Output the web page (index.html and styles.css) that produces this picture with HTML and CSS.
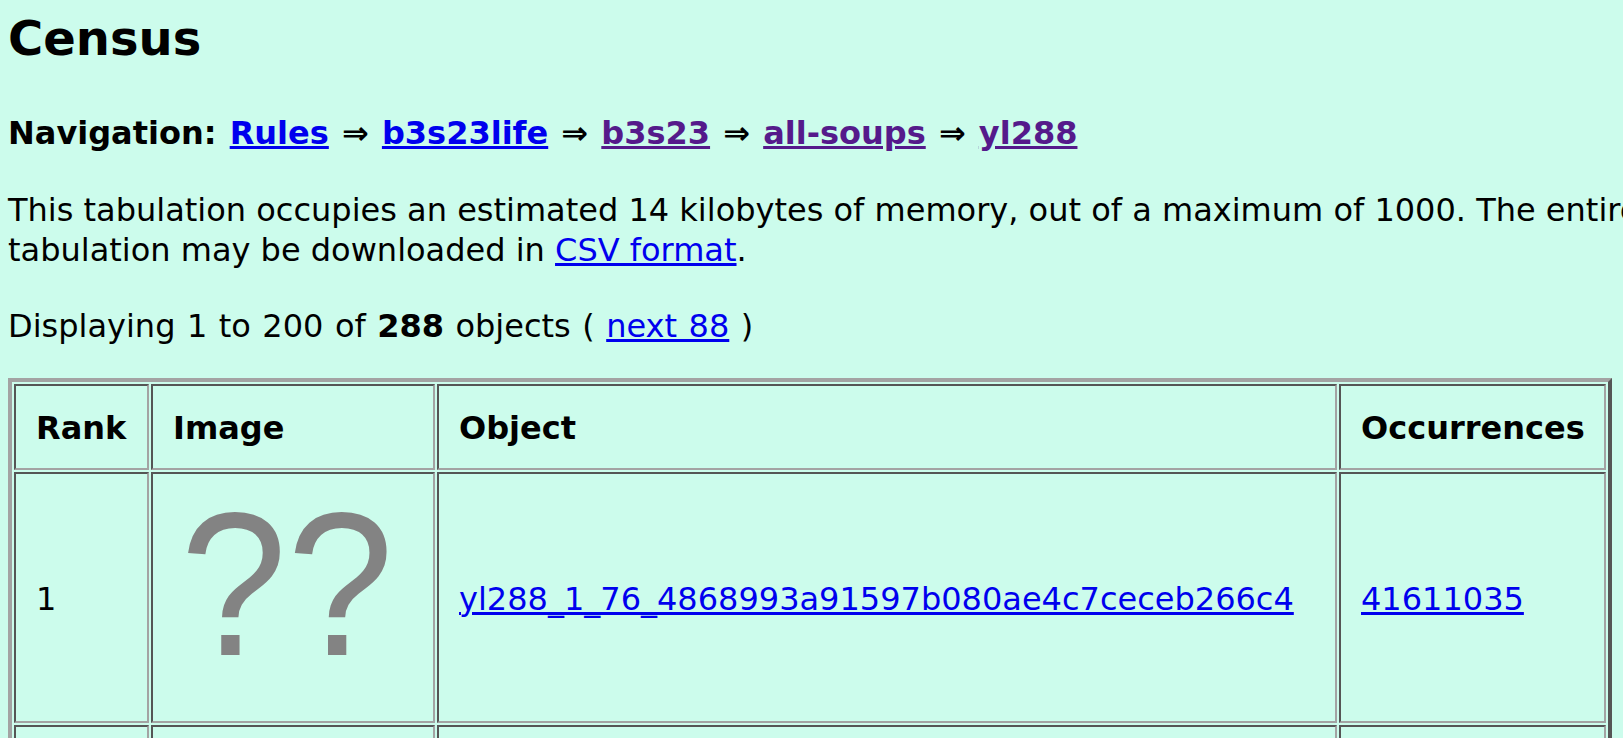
FILE: index.html
```html
<!DOCTYPE html>
<html>
<head>
<meta charset="utf-8">
<title>Census</title>
<link rel="stylesheet" href="styles.css">
</head>
<body>
<h1 class="title">Census</h1>
<p class="nav"><b>Navigation:</b> <a class="link" href="#">Rules</a> &rArr; <a class="link" href="#">b3s23life</a> &rArr; <a class="link visited" href="#">b3s23</a> &rArr; <a class="link visited" href="#">all-soups</a> &rArr; <a class="link visited" href="#">yl288</a></p>
<p class="text memory">This tabulation occupies an estimated 14 kilobytes of memory, out of a maximum of 1000. The entire tabulation may be downloaded in <a class="link" href="#">CSV format</a>.</p>
<p class="text display">Displaying 1 to 200 of <b>288</b> objects ( <a class="link" href="#">next 88</a> )</p>
<table class="census">
<thead>
<tr>
<th class="c-rank">Rank</th>
<th class="c-image">Image</th>
<th class="c-object">Object</th>
<th class="c-occ">Occurrences</th>
</tr>
</thead>
<tbody>
<tr>
<td>1</td>
<td><svg class="unknown" width="240" height="205" viewBox="0 0 240 205"><text x="114" y="159" text-anchor="middle" transform="translate(114 0) scale(0.94 1) translate(-114 0)" font-family="Liberation Sans, Arial, sans-serif" font-size="204" fill="#838383">??</text></svg></td>
<td><a class="link" href="#">yl288_1_76_4868993a91597b080ae4c7ceceb266c4</a></td>
<td><a class="link" href="#">41611035</a></td>
</tr>
<tr>
<td>2</td>
<td><svg class="unknown" width="240" height="205" viewBox="0 0 240 205"><text x="114" y="159" text-anchor="middle" transform="translate(114 0) scale(0.94 1) translate(-114 0)" font-family="Liberation Sans, Arial, sans-serif" font-size="204" fill="#838383">??</text></svg></td>
<td><a class="link" href="#">yl288_1_76_4868993a91597b080ae4c7ceceb266c4</a></td>
<td><a class="link" href="#">41611035</a></td>
</tr>
</tbody>
</table>
</body>
</html>
```

FILE: styles.css
```css
html, body {
  overflow-x: hidden;
}
body {
  margin: 0;
  padding: 0 8px;
  background: #ccfcec;
  color: #000;
  font-family: "DejaVu Sans", Verdana, sans-serif;
  font-size: 32px;
  line-height: 40px;
}
.title {
  margin: 10px 0 0;
  font-size: 48px;
  line-height: 56px;
  font-weight: bold;
}
.nav {
  margin: 47px 0 0;
  font-weight: bold;
  white-space: nowrap;
  word-spacing: 2px;
}
.text {
  margin: 0;
}
.memory {
  margin-top: 37px;
  width: 1760px;
}
.display {
  margin-top: 36px;
  word-spacing: 1.3px;
}
.link {
  color: #0000ee;
  text-decoration: underline;
}
.link.visited {
  color: #551a8b;
}
.census {
  margin-top: 32px;
  box-sizing: border-box;
  width: 1604px;
  table-layout: fixed;
  border-collapse: separate;
  border-spacing: 2px;
  border: 4px solid;
  border-color: #a3a3a3 #555555 #555555 #a3a3a3;
}
.census th,
.census td {
  box-sizing: border-box;
  border: 2px solid;
  border-color: #555555 #a3a3a3 #a3a3a3 #555555;
  padding: 22px 20px 20px;
  line-height: 40px;
  text-align: left;
  vertical-align: middle;
  white-space: nowrap;
}
.census th {
  font-weight: bold;
}
.c-rank { width: 135px; }
.c-image { width: 284px; }
.c-object { width: 900px; }
.c-occ { width: 267px; }
.unknown {
  display: block;
}
```
